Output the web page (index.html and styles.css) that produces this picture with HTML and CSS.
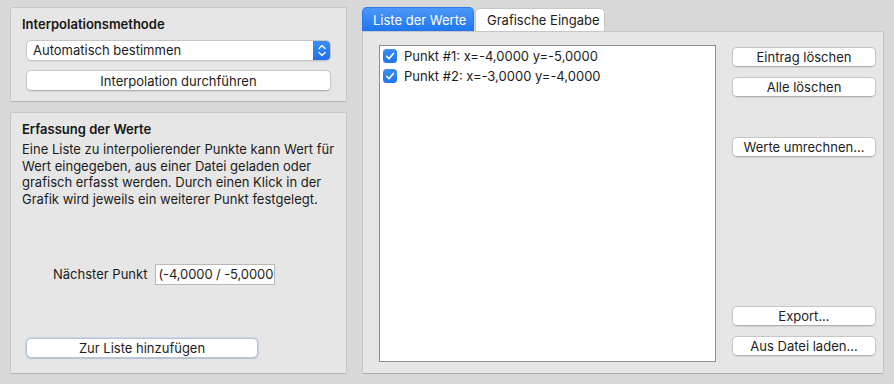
FILE: index.html
```html
<!DOCTYPE html>
<html lang="de">
<head>
<meta charset="utf-8">
<title>Interpolation</title>
<link rel="stylesheet" href="styles.css">
</head>
<body>
<div class="window">
  <div class="left">
    <section class="group g1">
      <h2 class="title">Interpolationsmethode</h2>
      <div class="select">
        <span class="select-text">Automatisch bestimmen</span>
        <span class="stepper">
          <svg width="18" height="21" viewBox="0 0 18 21"><path d="M6 8.5 L9 5.5 L12 8.5 M6 12.5 L9 15.5 L12 12.5" fill="none" stroke="#fff" stroke-width="1.3" stroke-linecap="round" stroke-linejoin="round"/></svg>
        </span>
      </div>
      <button class="btn btn-wide">Interpolation durchführen</button>
    </section>
    <section class="group g2">
      <h2 class="title">Erfassung der Werte</h2>
      <p class="desc">Eine Liste zu interpolierender Punkte kann Wert für<br>Wert eingegeben, aus einer Datei geladen oder<br>grafisch erfasst werden. Durch einen Klick in der<br>Grafik wird jeweils ein weiterer Punkt festgelegt.</p>
      <div class="field-row">
        <span class="field-label">Nächster Punkt</span>
        <div class="input">(-4,0000 / -5,0000</div>
      </div>
      <button class="btn btn-add">Zur Liste hinzufügen</button>
    </section>
  </div>
  <div class="right">
    <div class="tabs">
      <div class="tab tab-active">Liste der Werte</div>
      <div class="tab">Grafische Eingabe</div>
    </div>
    <div class="panel">
      <div class="list">
        <div class="row"><span class="check"><svg width="14" height="14" viewBox="0 0 14 14"><path d="M3.6 7.3 L6 9.7 L10.4 4.4" fill="none" stroke="#fff" stroke-width="1.5" stroke-linecap="round" stroke-linejoin="round"/></svg></span><span>Punkt #1: x=-4,0000 y=-5,0000</span></div>
        <div class="row"><span class="check"><svg width="14" height="14" viewBox="0 0 14 14"><path d="M3.6 7.3 L6 9.7 L10.4 4.4" fill="none" stroke="#fff" stroke-width="1.5" stroke-linecap="round" stroke-linejoin="round"/></svg></span><span>Punkt #2: x=-3,0000 y=-4,0000</span></div>
      </div>
      <div class="actions">
        <button class="btn act">Eintrag löschen</button>
        <button class="btn act">Alle löschen</button>
        <button class="btn act act-gap">Werte umrechnen...</button>
        <button class="btn act act-bottom">Export...</button>
        <button class="btn act">Aus Datei laden...</button>
      </div>
    </div>
  </div>
</div>
</body>
</html>
```

FILE: styles.css
```css
* { box-sizing: border-box; }
html, body { margin: 0; padding: 0; }
body {
  background: #d8d8d8;
  font-family: "Inter", "Liberation Sans", Arial, sans-serif;
  font-size: 13px;
  color: #1c1c1c;
  width: 894px;
  height: 384px;
  overflow: hidden;
}
.window {
  display: flex;
  gap: 15px;
  padding: 7px 10px 0 10px;
  height: 384px;
}
.left {
  width: 337px;
  display: flex;
  flex-direction: column;
  gap: 10px;
}
.group {
  background: #e6e6e6;
  border: 1px solid #c6c6c6;
  border-bottom-color: #b4b4b4;
  border-radius: 2px;
  padding: 0 15px 0 11px;
}
.g1 { height: 95px; padding-top: 8px; }
.g2 { height: 262px; padding-top: 8px; display: flex; flex-direction: column; align-items: flex-start; }
.title {
  margin: 0;
  font-size: 13px;
  font-weight: 600;
  line-height: 17px;
  height: 17px;
  color: #161616;
}
.select {
  margin: 7px 0 0 4px;
  height: 21px;
  background: #fff;
  border: 1px solid #c4c4c4;
  border-radius: 5px;
  display: flex;
  align-items: center;
  box-shadow: 0 1px 1px rgba(0,0,0,0.06);
  overflow: hidden;
}
.select-text { flex: 1; padding-left: 6px; line-height: 19px; }
.stepper {
  width: 18px;
  height: 21px;
  margin: -1px -1px -1px 0;
  background: linear-gradient(#3d8ff7, #1d6fe8);
  border-radius: 0 5px 5px 0;
  display: flex;
}
.btn {
  font-family: inherit;
  font-size: 13px;
  color: #1c1c1c;
  background: #fff;
  border: 1px solid #c6c6c6;
  border-bottom-color: #b0b0b0;
  border-radius: 5px;
  height: 20px;
  padding: 0;
  line-height: 18px;
  box-shadow: 0 0.5px 1px rgba(0,0,0,0.08);
}
.btn-wide {
  display: block;
  width: 305px;
  height: 21px;
  margin: 9px 0 0 4px;
}
.desc {
  margin: 3px 0 0 0;
  line-height: 16.7px;
  white-space: nowrap;
}
.field-row {
  margin: 56px 0 0 31px;
  display: flex;
  align-items: center;
  gap: 8px;
}
.field-label { line-height: 16px; }
.input {
  width: 120px;
  height: 21px;
  background: #fff;
  border: 1px solid #b8b8b8;
  padding-left: 2px;
  line-height: 19px;
  white-space: nowrap;
  overflow: hidden;
  letter-spacing: -0.1px;
}
.btn-add {
  width: 232px;
  margin: 53px 0 0 4px;
  border-color: #b9c6d8;
  box-shadow: 0 0 0 1px rgba(110,160,230,0.25), 0 1px 1px rgba(0,0,0,0.1);
}
.right {
  width: 522px;
  display: flex;
  flex-direction: column;
}
.tabs {
  display: flex;
  height: 24px;
  align-items: flex-end;
}
.tab {
  height: 23px;
  padding: 0 10px 0 11px;
  background: #fff;
  border: 1px solid #c6c6c6;
  border-bottom: none;
  border-radius: 5px 5px 0 0;
  line-height: 22px;
  margin-left: 1px;
  white-space: nowrap;
}
.tab-active {
  height: 24px;
  margin-left: 0;
  width: 112px;
  padding: 0 0 0 10px;
  background: linear-gradient(#4a98f8, #1f76f0);
  border-color: #2a78e6;
  color: #fff;
  line-height: 24px;
}
.tab:not(.tab-active) { width: 130px; }
.panel {
  height: 343px;
  background: #e6e6e6;
  border: 1px solid #c6c6c6;
  border-bottom-color: #acacac;
  border-radius: 0 2px 2px 2px;
  display: flex;
  padding: 0 7px 0 16px;
}
.list {
  width: 337px;
  height: 317px;
  margin-top: 13px;
  background: #fff;
  border: 1px solid #8e8e8e;
}
.row {
  height: 20px;
  display: flex;
  align-items: center;
  padding-left: 3px;
  gap: 7px;
  white-space: nowrap;
}
.check {
  width: 14px;
  height: 14px;
  border-radius: 3.5px;
  background: linear-gradient(#3b8ff6, #1f74ee);
  display: flex;
}
.actions {
  margin-left: 16px;
  width: 144px;
  display: flex;
  flex-direction: column;
  padding: 15px 0 17px 0;
}
.act { width: 144px; margin-top: 10px; flex: none; }
.act:first-child { margin-top: 0; }
.act-gap { margin-top: 40px; }
.act-bottom { margin-top: auto; }
```
